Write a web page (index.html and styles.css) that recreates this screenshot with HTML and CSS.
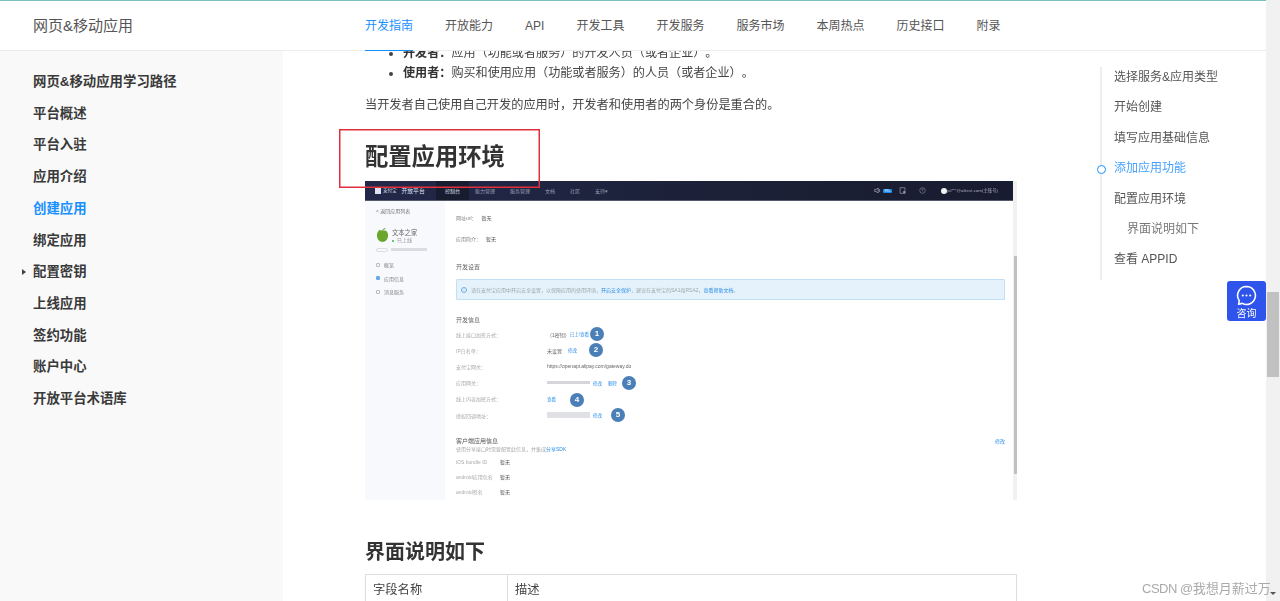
FILE: index.html
```html
<!DOCTYPE html>
<html lang="zh-CN">
<head>
<meta charset="utf-8">
<title>配置应用环境</title>
<link rel="stylesheet" href="styles.css">
</head>
<body>
<div class="page">
  <div class="page-col">
    <header class="topbar">
      <div class="brand">网页&amp;移动应用</div>
      <nav class="topnav">
        <a class="active">开发指南</a><a>开放能力</a><a>API</a><a>开发工具</a><a>开发服务</a><a>服务市场</a><a>本周热点</a><a>历史接口</a><a>附录</a>
      </nav>
    </header>
    <div class="layout">
      <aside class="side">
        <ul>
          <li>网页&amp;移动应用学习路径</li><li>平台概述</li><li>平台入驻</li><li>应用介绍</li>
          <li class="on">创建应用</li><li>绑定应用</li><li class="arrow">配置密钥</li><li>上线应用</li>
          <li>签约功能</li><li>账户中心</li><li>开放平台术语库</li>
        </ul>
      </aside>
      <main class="main">
        <article class="article">
          <ul class="bullets">
            <li><b>开发者：</b>应用（功能或者服务）的开发人员（或者企业）。</li>
            <li><b>使用者：</b>购买和使用应用（功能或者服务）的人员（或者企业）。</li>
          </ul>
          <p class="para">当开发者自己使用自己开发的应用时，开发者和使用者的两个身份是重合的。</p>
          <h1 class="h1">配置应用环境</h1>
          <div class="shot">
            <div class="m-col">
              <div class="m-nav">
                <span class="m-logo"><i class="m-logo-ico"></i>支付宝<em>开放平台</em></span>
                <span class="m-tab active">控制台</span><span class="m-tab">能力管理</span><span class="m-tab">服务管理</span><span class="m-tab">文档</span><span class="m-tab">社区</span><span class="m-tab">支持▾</span>
                <span class="m-right">
                  <svg class="m-ico" viewBox="0 0 10 10"><path d="M1 3.500h2L6 1.500v7L3 6.500H1z" fill="none" stroke="#aab" stroke-width="1"/><path d="M8 3v4" stroke="#aab"/></svg>
                  <span class="m-badge">99+</span>
                  <svg class="m-ico m-doc" viewBox="0 0 10 10"><path d="M1.500 1h7v8h-7z" fill="none" stroke="#99a" stroke-width="1"/><path d="M6 6h3v3H6z" fill="#99a"/></svg>
                  <svg class="m-ico m-help" viewBox="0 0 10 10"><circle cx="5" cy="5" r="4" fill="none" stroke="#99a" stroke-width=".8"/><path d="M4 4a1 1 0 1 1 1 1.200V6" fill="none" stroke="#99a" stroke-width=".8"/></svg>
                  <i class="m-avatar"></i><span class="m-mail">jul***@alitest.com(主账号)</span>
                </span>
              </div>
              <div class="m-body">
                <div class="m-side">
                  <div class="m-back">&lt; 返回应用列表</div>
                  <div class="m-app">
                    <svg class="m-apple" viewBox="0 0 14 16"><path d="M7 3C3 1.500 1 4 1 8c0 4 3 7 6 7s6-3 6-7c0-4-2-6.500-6-5z" fill="#6aa52c"/><path d="M7 3c0-1 1-2 3-2.500" stroke="#5a7d2c" fill="none"/><path d="M2 3.500 6 3 4 1.500z" fill="#8bbf4a"/></svg>
                    <div><div class="m-appname">文本之家</div><div class="m-status"><i></i>已上线</div></div>
                  </div>
                  <div class="m-appid"><i class="m-tag"></i><i class="m-smudge"></i></div>
                  <div class="m-menu"><i></i>概览</div>
                  <div class="m-menu cur"><i></i>应用信息</div>
                  <div class="m-menu"><i></i>消息服务</div>
                </div>
                <div class="m-main">
                  <div class="m-kv first"><span>网址url：</span><b>暂无</b></div>
                  <div class="m-kv second"><span>应用简介：</span><b>暂无</b></div>
                  <div class="m-head one">开发设置</div>
                  <div class="m-info"><i class="m-info-ico">i</i>请在支付宝应用中开启安全设置，以保障应用的使用环境，<u>开启安全保护</u>，建议在支付宝的SA1和RSA2，<u>查看帮助文档</u>。</div>
                  <div class="m-head two">开发信息</div>
                  <div class="m-row"><span class="lab">线上接口加签方式：</span><span class="val">（1密钥）</span><u>已上/查看</u></div>
                  <div class="m-row"><span class="lab">IP白名单：</span><span class="val">未设置</span><u>修改</u></div>
                  <div class="m-row"><span class="lab">支付宝网关：</span><span class="val">https://openapi.alipay.com/gateway.do</span></div>
                  <div class="m-row"><span class="lab">应用网关：</span><i class="m-blur wide"></i><u>修改</u><u class="gap">删除</u></div>
                  <div class="m-row"><span class="lab">线上内容加密方式：</span><u>查看</u></div>
                  <div class="m-row"><span class="lab">授权回调地址：</span><i class="m-blur tall"></i><u>修改</u></div>
                  <div class="m-client">
                    <div class="m-client-h"><b>客户端应用信息</b><u>修改</u></div>
                    <div class="m-client-s">使用分享接口时需要配置此信息，并集成<u>分享SDK</u></div>
                    <div class="m-crow"><span>iOS bundle ID</span><b>暂无</b></div>
                    <div class="m-crow"><span>android应用包名</span><b>暂无</b></div>
                    <div class="m-crow"><span>android签名</span><b>暂无</b></div>
                  </div>
                </div>
              </div>
            </div>
            <div class="m-scroll"><i></i></div>
            <span class="pin p1">1</span><span class="pin p2">2</span><span class="pin p3">3</span><span class="pin p4">4</span><span class="pin p5">5</span>
          </div>
          <h2 class="h2">界面说明如下</h2>
          <table class="table">
            <tr><td class="c1">字段名称</td><td>描述</td></tr>
          </table>
        </article>
      </main>
      <aside class="toc">
        <ul>
          <li>选择服务&amp;应用类型</li><li>开始创建</li><li>填写应用基础信息</li><li class="on">添加应用功能</li><li>配置应用环境</li><li class="sub">界面说明如下</li><li>查看 APPID</li>
        </ul>
      </aside>
    </div>
  </div>
  <div class="scrollbar"><i class="thumb"></i><i class="down"></i></div>
</div>
<div class="redbox"></div>
<div class="consult">
  <svg viewBox="0 0 20 20" width="21" height="21"><path d="M10 1.500a8.500 8.500 0 1 1-4 16l-3.500.8.600-3.400A8.500 8.500 0 0 1 10 1.500z" fill="none" stroke="#fff" stroke-width="1.500" stroke-linejoin="round"/><circle cx="6.500" cy="10" r="1" fill="#fff"/><circle cx="10" cy="10" r="1" fill="#fff"/><circle cx="13.500" cy="10" r="1" fill="#fff"/></svg>
  <span>咨询</span>
</div>
<div class="mark"><span class="mark-l">CSDN @</span>我想月薪过万</div>
</body>
</html>
```
FILE: styles.css
```css
* { box-sizing: border-box; }
html, body { margin: 0; padding: 0; height: 601px; overflow: hidden; }
body {
  font-family: "Liberation Sans", "Noto Sans CJK SC", sans-serif;
  font-size: 12px;
  color: #333;
  background: #fff;
  position: relative;
  text-spacing-trim: space-all;
  filter: blur(.3px);
}
ul { list-style: none; margin: 0; padding: 0; }
i { font-style: normal; }
.page { display: flex; height: 601px; }
.page-col { flex: 1; display: flex; flex-direction: column; min-width: 0; }
.topbar {
  height: 51px; flex: none; display: flex;
  border-top: 1px solid #7dbfc0;
  border-bottom: 1px solid #ececec;
  background: #fff;
}
.brand { width: 365px; padding-left: 33px; font-size: 15px; line-height: 50px; color: #555; }
.topnav { display: flex; gap: 32px; }
.topnav a { display: block; line-height: 51px; height: 50px; color: #555; font-size: 12px; }
.topnav a.active { color: #1890ff; border-bottom: 1.500px solid #1890ff; }
.layout { flex: 1; display: flex; min-height: 0; }
.side { width: 283px; flex: none; background: #f9f9f9; padding-top: 15px; }
.side li { position: relative; padding-left: 33px; font-size: 13.400px; font-weight: 700; line-height: 31.700px; color: #3a3a3a; }
.side li.on { color: #1890ff; }
.side li.arrow::before {
  content: ""; position: absolute; left: 22px; top: 13px;
  border-left: 4px solid #444; border-top: 3px solid transparent; border-bottom: 3px solid transparent;
}
.main { flex: 1; min-width: 0; overflow: hidden; }
.article { width: 652px; margin: -8px 0 0 82px; }
.bullets { padding-left: 38px; }
.bullets li { line-height: 20px; list-style: disc; color: #444; font-size: 12.100px; }
.bullets b { color: #333; }
.para { margin: 12px 0 0; line-height: 20px; color: #444; font-size: 12.200px; }
.h1 { margin: 24px 0 6px; font-size: 23.300px; line-height: 36px; font-weight: 700; color: #333; }
.shot { position: relative; height: 319px; display: flex; font-size: 5px; color: #888; filter: blur(.5px); }
.m-col { flex: 1; min-width: 0; display: flex; flex-direction: column; }
.m-nav { height: 20px; flex: none; display: flex; align-items: stretch; background: linear-gradient(90deg, #23284a, #1b2036 60%, #181c30); color: #9a9fb5; line-height: 20px; border-bottom: 1px solid #555a6a; padding-left: 10px; }
.m-logo { width: 61px; flex: none; color: #dfe2ee; font-size: 4.500px; display: flex; align-items: center; gap: 2px; }
.m-logo em { font-style: normal; font-size: 5.800px; margin-left: 3px; }
.m-logo-ico { width: 6px; height: 6px; background: #dfe2ee; }
.m-tab { padding: 0 9px; white-space: nowrap; margin-right: -3px; }
.m-tab.active { background: #181c2f; color: #dfe2ee; }
.m-right { margin-left: auto; display: flex; align-items: center; padding-right: 8px; }
.m-ico { width: 7px; height: 7px; }
.m-badge { width: 9px; height: 4px; margin-left: 2px; background: #1e8bf0; color: #fff; font-size: 3.500px; line-height: 4px; text-align: center; border-radius: 1px; }
.m-doc { margin-left: 7px; }
.m-help { margin-left: 13px; }
.m-avatar { width: 6px; height: 6px; margin-left: 15px; border-radius: 50%; background: #f2f2f2; }
.m-mail { width: 58px; font-size: 4.400px; color: #aab; white-space: nowrap; }
.m-body { flex: 1; display: flex; min-height: 0; }
.m-side { width: 80px; flex: none; background: #f7f9fd; padding: 5px 0 0 11px; }
.m-back { line-height: 10px; color: #777; }
.m-app { display: flex; gap: 3px; margin-top: 12px; height: 18px; }
.m-apple { width: 13px; height: 15px; }
.m-appname { font-size: 6.300px; line-height: 9px; color: #666; }
.m-status { line-height: 7px; color: #999; }
.m-status i { display: inline-block; width: 2px; height: 2px; margin-right: 3px; border-radius: 50%; background: #39b54a; vertical-align: middle; }
.m-appid { display: flex; gap: 3px; align-items: center; margin-top: 1px; height: 5px; }
.m-tag { width: 12px; height: 4px; border: 1px solid #ddd; border-radius: 2px; }
.m-smudge { width: 36px; height: 3px; background: #dcdde2; }
.m-menu { display: flex; align-items: center; gap: 4px; height: 13.500px; color: #888; }
.m-appid + .m-menu { margin-top: 6px; }
.m-menu i { width: 4px; height: 4px; border: 1px solid #bbb; border-radius: 1px; }
.m-menu.cur i { background: #6aa8e8; border-color: #6aa8e8; }
.m-main { flex: 1; min-width: 0; padding: 0 8px 0 11px; }
.m-kv { display: flex; gap: 5px; line-height: 10px; }
.m-kv.first { margin-top: 12px; }
.m-kv.second { margin-top: 11px; }
.m-kv b { font-weight: 400; color: #555; }
.m-head { font-size: 6px; line-height: 10px; color: #666; }
.m-head.one { margin-top: 18px; }
.m-head.two { margin-top: 15px; }
.m-info { margin-top: 7px; height: 21px; display: flex; align-items: center; padding-left: 4px; background: #e6f2fb; border: 1px solid #bfe0f7; border-bottom-width: 1.500px; border-radius: 1px; color: #9aa; white-space: pre; }
.m-info u, .m-row u, .m-client u { text-decoration: none; color: #2b8fe8; }
.m-info-ico { width: 6px; height: 6px; margin-right: 4px; border: 1px solid #6cb0e8; border-radius: 50%; font-size: 4px; line-height: 4px; text-align: center; color: #6cb0e8; }
.m-row { display: flex; align-items: center; height: 16.200px; white-space: nowrap; }
.m-head.two + .m-row { margin-top: 1px; }
.m-row .lab { width: 91px; flex: none; color: #aaa; }
.m-row .val { min-width: 21px; color: #666; }
.m-row u { font-size: 4.500px; }
.m-row u.gap { margin-left: 6px; }
.m-blur { display: block; background: #d4d6da; margin-right: 3px; }
.m-blur.wide { width: 43px; height: 3px; }
.m-blur.tall { width: 43px; height: 6px; background: #e0e1e4; }
.m-client { margin-top: 13px; }
.m-client-h { display: flex; justify-content: space-between; line-height: 8px; font-size: 6px; color: #555; padding-top: 1px; }
.m-client-h b { font-weight: 400; }
.m-client-h u { font-size: 5px; }
.m-client-s { line-height: 8px; color: #aaa; }
.m-crow { display: flex; height: 15px; align-items: center; color: #aaa; }
.m-client-s + .m-crow { margin-top: 1px; }
.m-crow span { width: 44px; flex: none; }
.m-crow b { font-weight: 400; color: #555; }
.m-scroll { width: 4px; flex: none; background: #f1f1f1; padding-top: 75px; }
.m-scroll i { display: block; width: 3px; margin-left: 1px; height: 218px; background: #c1c1c1; }
.pin { position: absolute; width: 14px; height: 14px; border-radius: 50%; background: #4a7fb8; color: #fff; font-size: 8px; font-weight: 700; line-height: 14px; text-align: center; }
.p1 { left: 225px; top: 146px; }
.p2 { left: 224px; top: 162px; }
.p3 { left: 257px; top: 195px; }
.p4 { left: 205px; top: 212px; }
.p5 { left: 246px; top: 227px; }
.h2 { margin: 37px 0 7px; font-size: 20px; line-height: 30px; font-weight: 700; color: #333; }
.table { width: 652px; border-collapse: collapse; }
.table td { border: 1px solid #ddd; padding: 0 7px; height: 28px; font-size: 12.300px; color: #444; }
.table .c1 { width: 142px; }
.toc { width: 166px; flex: none; padding-top: 16px; }
.toc ul { display: flow-root; border-left: 2px solid #eee; height: 213px; }
.toc li { position: relative; padding-left: 12px; line-height: 30.400px; color: #555; font-size: 12px; }
.toc li:first-child { margin-top: -5px; }
.toc li.sub { padding-left: 25px; color: #777; }
.toc li.on { color: #45a0ff; }
.toc li.on::before { content: ""; position: absolute; left: -5px; top: 12px; width: 7px; height: 7px; border: 1.500px solid #1890ff; border-radius: 50%; background: #fff; }
.scrollbar { width: 14px; flex: none; background: #f1f1f1; padding-top: 292px; position: relative; }
.thumb { display: block; width: 12px; height: 85px; margin-left: 1px; background: #c1c1c1; }
.down { position: absolute; left: 4px; bottom: 6px; border-top: 3px solid #555; border-left: 3px solid transparent; border-right: 3px solid transparent; }
.redbox { position: absolute; left: 339px; top: 129px; width: 201px; height: 59px; box-shadow: inset 0 0 0 1.500px #e0303c; }
.consult { position: absolute; left: 1227px; top: 281px; width: 39px; height: 40px; display: flex; flex-direction: column; align-items: center; padding-top: 4px; background: #2f54eb; border-radius: 3px; color: #fff; }
.consult svg { flex: none; }
.consult span { font-size: 10px; line-height: 13px; margin-top: 1px; }
.mark { position: absolute; left: 1142px; top: 580px; font-size: 13px; line-height: 18px; color: #aaa; white-space: nowrap; }
.mark-l { letter-spacing: -.5px; }
```
